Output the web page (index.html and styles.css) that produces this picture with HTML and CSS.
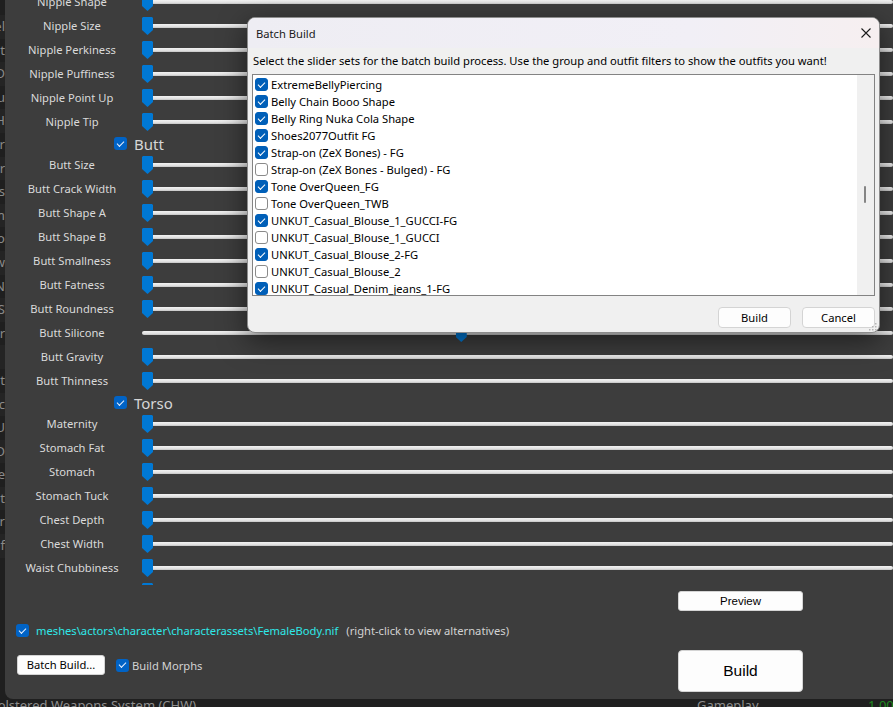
FILE: index.html
```html
<!DOCTYPE html>
<html lang="en">
    <head>
        <meta charset="UTF-8">
        <meta name="viewport" content="width=device-width, initial-scale=1.0">
        <title>BodySlide - Batch Build</title>
        <link rel="stylesheet" href="styles.css">
    </head>
    <body>
        <div class="screen">
            <div class="behind">
                <span>Nipple Shapel</span>
                <span>Hair Cut</span>
                <span>HD</span>
                <span>Menu</span>
                <span>FH</span>
                <span>Armor</span>
                <span>Color</span>
                <span>Items</span>
                <span>Sim</span>
                <span>Deco</span>
                <span>Follow</span>
                <span>MN</span>
                <span>FS</span>
                <span>Power</span>
                <span></span>
                <span>Combat</span>
                <span>Add-c</span>
                <span>UIU</span>
                <span>HD</span>
                <span>Title</span>
                <span>Cut</span>
                <span>Armor</span>
                <span>Staf</span>
            </div>

            <div class="main">
                <div class="sliders">
                    <div class="slider-list">
                        <div class="row"><span class="label">Nipple Shape</span><div class="slider"><div class="track"></div><div class="thumb"></div></div></div>
                        <div class="row"><span class="label">Nipple Size</span><div class="slider"><div class="track"></div><div class="thumb"></div></div></div>
                        <div class="row"><span class="label">Nipple Perkiness</span><div class="slider"><div class="track"></div><div class="thumb"></div></div></div>
                        <div class="row"><span class="label">Nipple Puffiness</span><div class="slider"><div class="track"></div><div class="thumb"></div></div></div>
                        <div class="row"><span class="label">Nipple Point Up</span><div class="slider"><div class="track"></div><div class="thumb"></div></div></div>
                        <div class="row"><span class="label">Nipple Tip</span><div class="slider"><div class="track"></div><div class="thumb"></div></div></div>

                        <div class="group"><span class="check on"></span>Butt</div>
                        <div class="row"><span class="label">Butt Size</span><div class="slider"><div class="track"></div><div class="thumb"></div></div></div>
                        <div class="row"><span class="label">Butt Crack Width</span><div class="slider"><div class="track"></div><div class="thumb"></div></div></div>
                        <div class="row"><span class="label">Butt Shape A</span><div class="slider"><div class="track"></div><div class="thumb"></div></div></div>
                        <div class="row"><span class="label">Butt Shape B</span><div class="slider"><div class="track"></div><div class="thumb"></div></div></div>
                        <div class="row"><span class="label">Butt Smallness</span><div class="slider"><div class="track"></div><div class="thumb"></div></div></div>
                        <div class="row"><span class="label">Butt Fatness</span><div class="slider"><div class="track"></div><div class="thumb"></div></div></div>
                        <div class="row"><span class="label">Butt Roundness</span><div class="slider"><div class="track"></div><div class="thumb"></div></div></div>
                        <div class="row"><span class="label">Butt Silicone</span><div class="slider"><div class="track"></div><div class="thumb" style="--v: 0.424"></div></div></div>
                        <div class="row"><span class="label">Butt Gravity</span><div class="slider"><div class="track"></div><div class="thumb"></div></div></div>
                        <div class="row"><span class="label">Butt Thinness</span><div class="slider"><div class="track"></div><div class="thumb"></div></div></div>

                        <div class="group"><span class="check on"></span>Torso</div>
                        <div class="row"><span class="label">Maternity</span><div class="slider"><div class="track"></div><div class="thumb"></div></div></div>
                        <div class="row"><span class="label">Stomach Fat</span><div class="slider"><div class="track"></div><div class="thumb"></div></div></div>
                        <div class="row"><span class="label">Stomach</span><div class="slider"><div class="track"></div><div class="thumb"></div></div></div>
                        <div class="row"><span class="label">Stomach Tuck</span><div class="slider"><div class="track"></div><div class="thumb"></div></div></div>
                        <div class="row"><span class="label">Chest Depth</span><div class="slider"><div class="track"></div><div class="thumb"></div></div></div>
                        <div class="row"><span class="label">Chest Width</span><div class="slider"><div class="track"></div><div class="thumb"></div></div></div>
                        <div class="row"><span class="label">Waist Chubbiness</span><div class="slider"><div class="track"></div><div class="thumb"></div></div></div>
                        <div class="row"><span class="label">Waist Height</span><div class="slider"><div class="track"></div><div class="thumb"></div></div></div>
                    </div>
                </div>

                <div class="bottom">
                    <div></div>
                    <button class="btn arial">Preview</button>

                    <div class="path-row">
                        <span class="check on"></span>
                        <span class="path">meshes\actors\character\characterassets\FemaleBody.nif</span>
                        <span class="hint">(right-click to view alternatives)</span>
                    </div>

                    <div class="build-opts">
                        <button class="btn">Batch Build...</button>
                        <span class="check on"></span>
                        <span class="hint">Build Morphs</span>
                    </div>
                    <button class="btn big arial">Build</button>
                </div>
            </div>
        </div>

        <div class="taskbar">
            <span>Holstered Weapons System (CHW)</span>
            <span>Gameplay</span>
            <span class="version">1.000</span>
        </div>

        <div class="dialog">
            <div class="dialog-title">
                <span>Batch Build</span>
                <svg class="close" width="10" height="10" viewBox="0 0 10 10">
                    <path d="M0.5 0.5 L9.5 9.5 M9.5 0.5 L0.5 9.5" stroke="#1b1b1b" stroke-width="1.1" fill="none"/>
                </svg>
            </div>
            <div class="dialog-body">
                <p class="intro">Select the slider sets for the batch build process. Use the group and outfit filters to show the outfits you want!</p>
                <div class="listbox">
                    <div class="items">
                        <div class="item"><span class="box on"></span>ExtremeBellyPiercing</div>
                        <div class="item"><span class="box on"></span>Belly Chain Booo Shape</div>
                        <div class="item"><span class="box on"></span>Belly Ring Nuka Cola Shape</div>
                        <div class="item"><span class="box on"></span>Shoes2077Outfit FG</div>
                        <div class="item"><span class="box on"></span>Strap-on (ZeX Bones) - FG</div>
                        <div class="item"><span class="box"></span>Strap-on (ZeX Bones - Bulged) - FG</div>
                        <div class="item"><span class="box on"></span>Tone OverQueen_FG</div>
                        <div class="item"><span class="box"></span>Tone OverQueen_TWB</div>
                        <div class="item"><span class="box on"></span>UNKUT_Casual_Blouse_1_GUCCI-FG</div>
                        <div class="item"><span class="box"></span>UNKUT_Casual_Blouse_1_GUCCI</div>
                        <div class="item"><span class="box on"></span>UNKUT_Casual_Blouse_2-FG</div>
                        <div class="item"><span class="box"></span>UNKUT_Casual_Blouse_2</div>
                        <div class="item"><span class="box on"></span>UNKUT_Casual_Denim_jeans_1-FG</div>
                        <div class="item"><span class="box"></span>UNKUT_Casual_Denim_jeans_1</div>
                    </div>
                    <div class="scrollbar"><div class="scroll-thumb"></div></div>
                </div>
                <div class="dialog-buttons">
                    <button class="btn">Build</button>
                    <button class="btn">Cancel</button>
                </div>
            </div>
            <svg class="grip" width="8" height="8" viewBox="0 0 8 8">
                <rect x="6" y="0" width="1.5" height="1.5" fill="#b4b4b4"/>
                <rect x="3" y="3" width="1.5" height="1.5" fill="#b4b4b4"/>
                <rect x="6" y="3" width="1.5" height="1.5" fill="#b4b4b4"/>
                <rect x="0" y="6" width="1.5" height="1.5" fill="#b4b4b4"/>
                <rect x="3" y="6" width="1.5" height="1.5" fill="#b4b4b4"/>
                <rect x="6" y="6" width="1.5" height="1.5" fill="#b4b4b4"/>
            </svg>
        </div>
    </body>
</html>
```

FILE: styles.css
```css
* {
    box-sizing: border-box;
}

body {
    margin: 0;
    background: #1f1f1f;
    font-family: "Noto Sans", "Open Sans", sans-serif;
    font-size: 11.2px;
    overflow: hidden;
    position: relative;
    height: 707px;
}

.screen {
    display: flex;
    height: 699px;
}

/* window behind, only its right edge shows */
.behind {
    width: 5px;
    flex: none;
    overflow: hidden;
    padding-top: 15px;
}

.behind span {
    display: flex;
    justify-content: flex-end;
    height: 23.6px;
    line-height: 23.6px;
    white-space: nowrap;
    color: #8a8a8a;
    font-size: 13px;
}

.behind span:nth-child(odd) {
    background: #242424;
}

.main {
    flex: 1;
    background: #3d3d3d;
    border-bottom-left-radius: 8px;
    overflow: hidden;
    display: flex;
    flex-direction: column;
}

.sliders {
    height: 585px;
    flex: none;
    overflow: hidden;
}

.slider-list {
    margin-top: -10px;
}

.row {
    display: flex;
    height: 24px;
}

.label {
    width: 134px;
    flex: none;
    text-align: center;
    line-height: 24px;
    color: #dadada;
    white-space: nowrap;
}

.slider {
    flex: 1;
    position: relative;
    margin-left: 3px;
}

.track {
    position: absolute;
    left: 0;
    right: 0;
    top: 10px;
    height: 4px;
    border-radius: 2px;
    background: linear-gradient(#f2f2f2, #e2e2e2 60%, #c4c4c4);
}

.thumb {
    position: absolute;
    top: 3px;
    left: calc((100% - 11px) * var(--v, 0));
    width: 11px;
    height: 18px;
    background: #0078d4;
    clip-path: polygon(1px 0, 10px 0, 100% 1px, 100% 72%, 50% 100%, 0 72%, 0 1px);
}

.group {
    display: flex;
    align-items: center;
    gap: 7px;
    height: 19px;
    padding-left: 109px;
    color: #d6d6d6;
    font-size: 15px;
}

.check {
    width: 13px;
    height: 13px;
    flex: none;
    border-radius: 3px;
    background: #0063c6;
    display: grid;
    place-items: center;
}

.check.on::after {
    content: "";
    width: 6px;
    height: 3px;
    margin-top: -2px;
    border-left: 1px solid #e8f0ff;
    border-bottom: 1px solid #e8f0ff;
    transform: rotate(-45deg);
}

.bottom {
    display: grid;
    grid-template-columns: 1fr 125px;
    padding: 6px 90px 0 11px;
}

.btn {
    font-family: inherit;
    font-size: 11.2px;
    color: #000;
    background: #fdfdfd;
    border: 1px solid #d4d4d4;
    border-radius: 3px;
    height: 20px;
    padding: 0;
    line-height: 18px;
}

.btn.arial {
    font-family: "Liberation Sans", Arial, sans-serif;
    font-size: 11.5px;
}

.path-row {
    grid-column: 1 / 3;
    display: flex;
    align-items: center;
    gap: 7px;
    height: 13px;
    margin-top: 13px;
}

.path {
    color: #2ee8e8;
    margin-right: 1px;
}

.hint {
    color: #d2d2d2;
}

.build-opts {
    display: flex;
    align-items: center;
    gap: 11px;
    align-self: start;
    margin-top: 18px;
    padding-left: 1px;
}

.build-opts .btn {
    width: 88px;
}

.build-opts .check {
    margin-right: -8px;
}

.btn.big {
    height: 42px;
    margin-top: 13px;
    border-radius: 4px;
    font-size: 15.5px;
}

.taskbar {
    display: grid;
    grid-template-columns: 697px 171px 1fr;
    height: 8px;
    overflow: hidden;
    color: #8e8e8e;
    font-size: 13px;
    line-height: 14px;
}

.taskbar span {
    margin-top: -1px;
    white-space: nowrap;
}

.taskbar span:first-child {
    margin-left: -12px;
}

.taskbar .version {
    color: #1e8a1e;
}

/* batch build dialog */
.dialog {
    position: absolute;
    left: 247px;
    top: 17px;
    width: 633px;
    height: 316px;
    background: #f0f0f0;
    border: 1px solid #8c8c8c;
    border-radius: 8px;
    overflow: hidden;
    box-shadow: 0 8px 28px rgba(0, 0, 0, 0.5);
}

.dialog-title {
    height: 30px;
    display: flex;
    align-items: center;
    justify-content: space-between;
    padding: 0 8px 0 8px;
    background: linear-gradient(90deg, #eeedf3, #f1eff6 70%, #f6eff0);
    color: #1a1a1a;
}

.dialog-body {
    padding: 0 4px;
}

.intro {
    margin: 5px 0 0 1px;
    line-height: 16px;
    color: #000;
    white-space: nowrap;
}

.listbox {
    display: flex;
    height: 222px;
    margin-top: 5px;
    background: #fff;
    border: 1px solid #838383;
}

.items {
    flex: 1;
    padding-top: 1px;
    overflow: hidden;
}

.item {
    display: flex;
    align-items: center;
    gap: 3px;
    height: 17px;
    padding-left: 2px;
    color: #000;
    white-space: nowrap;
}

.box {
    width: 13px;
    height: 13px;
    flex: none;
    border-radius: 3px;
    border: 1px solid #8a8a8a;
    background: #fff;
    display: grid;
    place-items: center;
}

.box.on {
    background: #005fb8;
    border-color: #005fb8;
}

.box.on::after {
    content: "";
    width: 6px;
    height: 3px;
    margin-top: -2px;
    border-left: 1px solid #fff;
    border-bottom: 1px solid #fff;
    transform: rotate(-45deg);
}

.scrollbar {
    width: 17px;
    flex: none;
    background: #f0f0f0;
    padding: 111px 0 0 7px;
}

.scroll-thumb {
    width: 2px;
    height: 17px;
    border-radius: 1px;
    background: #858585;
}

.dialog-buttons {
    display: flex;
    justify-content: flex-end;
    gap: 11px;
    margin-top: 11px;
}

.dialog-buttons .btn {
    width: 73px;
    height: 21px;
    border-radius: 4px;
}

.grip {
    position: absolute;
    right: 2px;
    bottom: 1px;
}
```
